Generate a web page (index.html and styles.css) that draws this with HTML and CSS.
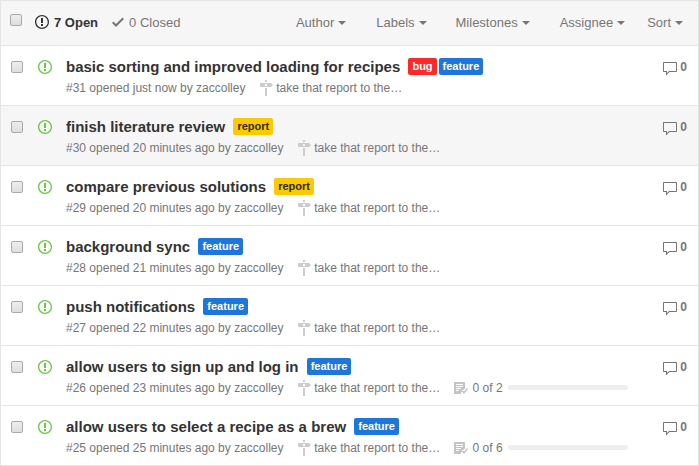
FILE: index.html
```html
<!DOCTYPE html>
<html lang="en">

<head>
    <meta charset="UTF-8">
    <meta name="viewport" content="width=device-width, initial-scale=1.0">
    <title>Issues</title>
    <link rel="stylesheet" href="styles.css">
</head>

<body>
    <svg class="defs" width="0" height="0">
        <symbol id="i-issue" viewBox="0 0 14 16">
            <path fill-rule="evenodd" d="M7 2.3c3.14 0 5.7 2.56 5.7 5.7s-2.56 5.7-5.7 5.7A5.71 5.71 0 0 1 1.3 8c0-3.14 2.56-5.7 5.7-5.7zM7 1C3.14 1 0 4.14 0 8s3.14 7 7 7 7-3.14 7-7-3.14-7-7-7zm1 3H6v5h2V4zm0 6H6v2h2v-2z"/>
        </symbol>
        <symbol id="i-check" viewBox="0 0 12 16">
            <path fill-rule="evenodd" d="M12 5l-8 8-4-4 1.5-1.5L4 10l6.5-6.5L12 5z"/>
        </symbol>
        <symbol id="i-milestone" viewBox="0 0 14 16">
            <path fill-rule="evenodd" d="M8 2H6V0h2v2zm4 5H2c-.55 0-1-.45-1-1V4c0-.55.45-1 1-1h10l2 2-2 2zM8 4H6v2h2V4zM6 16h2V8H6v8z"/>
        </symbol>
        <symbol id="i-comment" viewBox="0 0 16 16">
            <path fill-rule="evenodd" d="M14 1H2c-.55 0-1 .45-1 1v8c0 .55.45 1 1 1h2v3.5L7.5 11H14c.55 0 1-.45 1-1V2c0-.55-.45-1-1-1zm0 9H7l-2 2v-2H2V2h12v8z"/>
        </symbol>
        <symbol id="i-tasklist" viewBox="0 0 14 12">
            <path fill-rule="evenodd" d="M0 0h11v6.5l-4 4V12H0zM2 2v1h7V2zm0 2v1h7V4zm0 2v1h5V6zm0 2v1h3V8zM7.5 9l1-1L10 9.5 13 6l1 1-4 5z"/>
        </symbol>
    </svg>

    <div class="issues">
        <div class="issues-header">
            <span class="box head-box"></span>
            <div class="states">
                <a class="state active"><svg class="state-icon"><use href="#i-issue"/></svg>7 Open</a>
                <a class="state"><svg class="state-icon check"><use href="#i-check"/></svg>0 Closed</a>
            </div>
            <div class="filters">
                <a class="filter f-author">Author<i class="caret"></i></a>
                <a class="filter f-labels">Labels<i class="caret"></i></a>
                <a class="filter f-miles">Milestones<i class="caret"></i></a>
                <a class="filter f-assign">Assignee<i class="caret"></i></a>
                <a class="filter f-sort">Sort<i class="caret"></i></a>
            </div>
        </div>

        <div class="issue">
            <span class="box"></span>
            <svg class="issue-icon"><use href="#i-issue"/></svg>
            <div class="issue-main">
                <div class="issue-title">basic sorting and improved loading for recipes <span class="label red">bug</span><span class="label blue">feature</span></div>
                <div class="issue-meta">#31 opened just now by zaccolley <svg class="ms-icon"><use href="#i-milestone"/></svg> take that report to the…</div>
            </div>
            <div class="comments"><svg class="c-icon"><use href="#i-comment"/></svg>0</div>
        </div>

        <div class="issue hover">
            <span class="box"></span>
            <svg class="issue-icon"><use href="#i-issue"/></svg>
            <div class="issue-main">
                <div class="issue-title">finish literature review <span class="label yellow">report</span></div>
                <div class="issue-meta">#30 opened 20 minutes ago by zaccolley <svg class="ms-icon"><use href="#i-milestone"/></svg> take that report to the…</div>
            </div>
            <div class="comments"><svg class="c-icon"><use href="#i-comment"/></svg>0</div>
        </div>

        <div class="issue">
            <span class="box"></span>
            <svg class="issue-icon"><use href="#i-issue"/></svg>
            <div class="issue-main">
                <div class="issue-title">compare previous solutions <span class="label yellow">report</span></div>
                <div class="issue-meta">#29 opened 20 minutes ago by zaccolley <svg class="ms-icon"><use href="#i-milestone"/></svg> take that report to the…</div>
            </div>
            <div class="comments"><svg class="c-icon"><use href="#i-comment"/></svg>0</div>
        </div>

        <div class="issue">
            <span class="box"></span>
            <svg class="issue-icon"><use href="#i-issue"/></svg>
            <div class="issue-main">
                <div class="issue-title">background sync <span class="label blue">feature</span></div>
                <div class="issue-meta">#28 opened 21 minutes ago by zaccolley <svg class="ms-icon"><use href="#i-milestone"/></svg> take that report to the…</div>
            </div>
            <div class="comments"><svg class="c-icon"><use href="#i-comment"/></svg>0</div>
        </div>

        <div class="issue">
            <span class="box"></span>
            <svg class="issue-icon"><use href="#i-issue"/></svg>
            <div class="issue-main">
                <div class="issue-title">push notifications <span class="label blue">feature</span></div>
                <div class="issue-meta">#27 opened 22 minutes ago by zaccolley <svg class="ms-icon"><use href="#i-milestone"/></svg> take that report to the…</div>
            </div>
            <div class="comments"><svg class="c-icon"><use href="#i-comment"/></svg>0</div>
        </div>

        <div class="issue">
            <span class="box"></span>
            <svg class="issue-icon"><use href="#i-issue"/></svg>
            <div class="issue-main">
                <div class="issue-title">allow users to sign up and log in <span class="label blue">feature</span></div>
                <div class="issue-meta">#26 opened 23 minutes ago by zaccolley <svg class="ms-icon"><use href="#i-milestone"/></svg> take that report to the… <span class="tasks"><svg class="task-icon"><use href="#i-tasklist"/></svg>0 of 2<span class="progress"></span></span></div>
            </div>
            <div class="comments"><svg class="c-icon"><use href="#i-comment"/></svg>0</div>
        </div>

        <div class="issue">
            <span class="box"></span>
            <svg class="issue-icon"><use href="#i-issue"/></svg>
            <div class="issue-main">
                <div class="issue-title">allow users to select a recipe as a brew <span class="label blue">feature</span></div>
                <div class="issue-meta">#25 opened 25 minutes ago by zaccolley <svg class="ms-icon"><use href="#i-milestone"/></svg> take that report to the… <span class="tasks"><svg class="task-icon"><use href="#i-tasklist"/></svg>0 of 6<span class="progress"></span></span></div>
            </div>
            <div class="comments"><svg class="c-icon"><use href="#i-comment"/></svg>0</div>
        </div>
    </div>
</body>

</html>
```

FILE: styles.css
```css
body {
    margin: 0;
    background-color: #fff;
    color: #333;
    font-family: "Liberation Sans", Arial, sans-serif;
    font-size: 13px;
    overflow: hidden;
}

.defs {
    display: block;
    height: 0;
}

.issues {
    border: 1px solid #e5e5e5;
    border-bottom: none;
}

.issues-header {
    display: flex;
    align-items: center;
    height: 44px;
    background-color: #f6f6f6;
    border-bottom: 1px solid #e5e5e5;
}

.box {
    flex: none;
    width: 12px;
    height: 12px;
    margin-left: 10px;
    box-sizing: border-box;
    border: 1px solid #aaa;
    border-radius: 2px;
    background: linear-gradient(#ededed, #dedede);
}

.head-box {
    margin-left: 9px;
    margin-top: -6px;
}

.states {
    display: flex;
    align-items: center;
    margin-left: 13px;
    margin-top: -2px;
}

.state {
    display: flex;
    align-items: center;
    color: #767676;
    margin-right: 14px;
}

.state.active {
    color: #333;
    font-weight: bold;
}

.state-icon {
    width: 14px;
    height: 16px;
    margin-right: 5px;
    fill: #333;
}

.state-icon.check {
    width: 12px;
    fill: #767676;
    margin-right: 5px;
}

.filters {
    display: flex;
    align-items: center;
    margin-left: auto;
    margin-top: -2px;
}

.filter {
    display: flex;
    align-items: center;
    color: #767676;
}

.f-author { margin-right: 30px; }
.f-labels { margin-right: 29px; }
.f-miles { margin-right: 30px; }
.f-assign { margin-right: 22px; }
.f-sort { margin-right: 15px; }

.caret {
    width: 0;
    height: 0;
    margin-left: 4px;
    margin-top: 1px;
    border-top: 4px solid #767676;
    border-left: 4px solid transparent;
    border-right: 4px solid transparent;
}

.issue {
    display: flex;
    height: 59px;
    border-bottom: 1px solid #e5e5e5;
}

.issue.hover {
    background-color: #f6f6f6;
}

.issue .box {
    margin-top: 15px;
}

.issue-icon {
    flex: none;
    width: 14px;
    height: 16px;
    margin-left: 15px;
    margin-top: 13px;
    fill: #6cc644;
}

.issue-main {
    flex: 1;
    margin-left: 14px;
    padding-top: 11px;
}

.issue-title {
    font-size: 15px;
    font-weight: bold;
    line-height: 20px;
    white-space: nowrap;
}

.label {
    display: inline-block;
    height: 17px;
    line-height: 17px;
    padding: 0 4px;
    margin-left: 4px;
    font-size: 11px;
    border-radius: 2px;
    color: #fff;
    vertical-align: 2px;
}

.label.red + .label {
    margin-left: 2px;
}

.label.red { background-color: #fc2929; }
.label.blue { background-color: #1d76db; }
.label.yellow { background-color: #fbca04; color: #332900; }

.issue-meta {
    margin-top: 3px;
    font-size: 12px;
    line-height: 16px;
    color: #767676;
    white-space: nowrap;
}

.ms-icon {
    width: 14px;
    height: 16px;
    margin-left: 10px;
    fill: #ccc;
    vertical-align: -4px;
}

.tasks {
    margin-left: 10px;
}

.task-icon {
    width: 14px;
    height: 12px;
    margin-right: 5px;
    fill: #c4c4c4;
    vertical-align: -2px;
}

.progress {
    display: inline-block;
    width: 120px;
    height: 5px;
    margin-left: 5px;
    border-radius: 3px;
    background-color: #eee;
    vertical-align: 2px;
}

.comments {
    display: flex;
    align-items: flex-start;
    flex: none;
    margin-right: 11px;
    padding-top: 14px;
    font-size: 12px;
    line-height: 14px;
    font-weight: bold;
    color: #767676;
}

.c-icon {
    width: 16px;
    height: 16px;
    margin-top: 1px;
    margin-right: 2px;
    fill: #767676;
}
```
